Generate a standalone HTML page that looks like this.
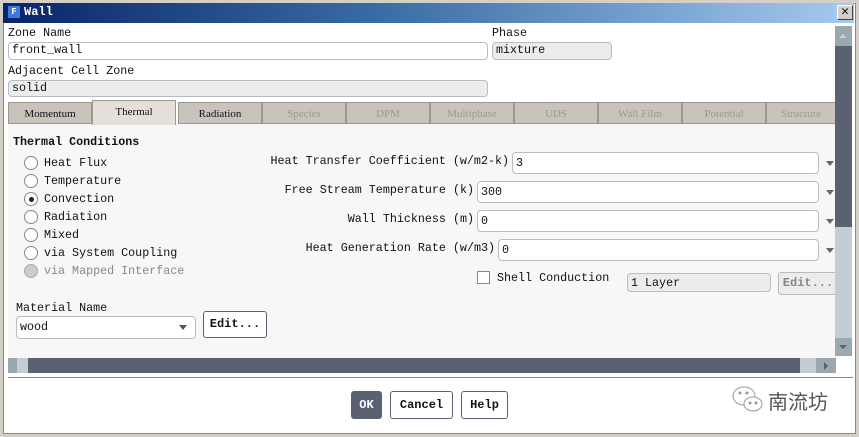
<!DOCTYPE html>
<html><head><meta charset="utf-8"><style>
*{box-sizing:border-box;margin:0;padding:0}
body{width:859px;height:437px;overflow:hidden;background:#d4d0c8;font-family:"Liberation Mono","Noto Sans CJK SC",monospace;font-size:11.7px;color:#111;position:relative}
.a{position:absolute;white-space:nowrap}
.win{position:absolute;left:3px;top:3px;width:853px;height:431px;background:#fff;border:1px solid #888}
.title{position:absolute;left:3px;top:3px;width:851px;height:20px;background:linear-gradient(90deg,#0a246a,#3a6ea5 45%,#a6caf0)}
.inp{position:absolute;border:1px solid #b8bcc4;border-radius:4px;background:#fff;padding-left:3px;line-height:15px}
.gr{background:#ececec}
.tab{position:absolute;top:102px;height:22px;width:84px;background:#c8c4bc;border:1px solid #9a9890;text-align:center;line-height:22px;font-size:11px;color:#9a9890;font-family:"Liberation Serif",serif}
.rad{position:absolute;left:24px;width:14px;height:14px;border:1px solid #888;border-radius:50%;background:#fff}
.btn{position:absolute;border:1px solid #5a6272;border-radius:3px;background:#fff;text-align:center;font-weight:bold;font-size:12px}
.dd{position:absolute;left:826px;width:0;height:0;border-left:4px solid transparent;border-right:4px solid transparent;border-top:5px solid #666}
</style></head><body>
<div class="win"></div>
<div class="title"></div>
<div class="a" style="left:8px;top:6px;width:12px;height:12px;background:#3b7be0;color:#fff;font-size:9px;font-weight:bold;text-align:center;line-height:12px">F</div>
<div class="a" style="left:24px;top:5px;color:#fff;font-weight:bold;font-size:12px">Wall</div>
<div class="a" style="left:837px;top:5px;width:16px;height:15px;background:#d4d0c8;border:1px solid #fff;border-right-color:#404040;border-bottom-color:#404040;text-align:center;line-height:12px;font-weight:bold;font-size:13px">✕</div>

<div class="a" style="left:8px;top:26px">Zone Name</div>
<div class="inp" style="left:8px;top:42px;width:480px;height:18px">front_wall</div>
<div class="a" style="left:492px;top:26px">Phase</div>
<div class="inp gr" style="left:492px;top:42px;width:120px;height:18px">mixture</div>
<div class="a" style="left:8px;top:64px">Adjacent Cell Zone</div>
<div class="inp gr" style="left:8px;top:80px;width:480px;height:17px">solid</div>

<div class="a" style="left:8px;top:124px;width:828px;height:234px;background:#f7f7f7"></div>
<div class="tab" style="left:8px;color:#111">Momentum</div>
<div class="tab" style="left:92px;top:100px;height:25px;background:#e4e0d8;color:#111;border-bottom:none">Thermal</div>
<div class="tab" style="left:178px;color:#111">Radiation</div>
<div class="tab" style="left:262px">Species</div>
<div class="tab" style="left:346px">DPM</div>
<div class="tab" style="left:430px">Multiphase</div>
<div class="tab" style="left:514px">UDS</div>
<div class="tab" style="left:598px">Wall Film</div>
<div class="tab" style="left:682px">Potential</div>
<div class="tab" style="left:766px;width:70px">Structure</div>

<div class="a" style="left:13px;top:135px;font-weight:bold">Thermal Conditions</div>
<div class="rad" style="top:156px"></div><div class="a" style="left:44px;top:156px">Heat Flux</div>
<div class="rad" style="top:174px"></div><div class="a" style="left:44px;top:174px">Temperature</div>
<div class="rad" style="top:192px"></div><div class="a" style="left:29px;top:197px;width:5px;height:5px;border-radius:50%;background:#222"></div><div class="a" style="left:44px;top:192px">Convection</div>
<div class="rad" style="top:210px"></div><div class="a" style="left:44px;top:210px">Radiation</div>
<div class="rad" style="top:228px"></div><div class="a" style="left:44px;top:228px">Mixed</div>
<div class="rad" style="top:246px"></div><div class="a" style="left:44px;top:246px">via System Coupling</div>
<div class="rad" style="top:264px;background:#ccc;border-color:#aaa"></div><div class="a" style="left:44px;top:264px;color:#888">via Mapped Interface</div>

<div class="a" style="right:350px;top:154px">Heat Transfer Coefficient (w/m2-k)</div>
<div class="inp" style="left:512px;top:152px;width:307px;height:22px;line-height:20px">3</div>
<div class="a" style="right:385px;top:183px">Free Stream Temperature (k)</div>
<div class="inp" style="left:477px;top:181px;width:342px;height:22px;line-height:20px">300</div>
<div class="a" style="right:385px;top:212px">Wall Thickness (m)</div>
<div class="inp" style="left:477px;top:210px;width:342px;height:22px;line-height:20px">0</div>
<div class="a" style="right:364px;top:241px">Heat Generation Rate (w/m3)</div>
<div class="inp" style="left:498px;top:239px;width:321px;height:22px;line-height:20px">0</div>
<div class="dd" style="top:161px"></div><div class="dd" style="top:190px"></div><div class="dd" style="top:219px"></div><div class="dd" style="top:248px"></div>
<div class="a" style="left:477px;top:271px;width:13px;height:13px;border:1px solid #888;background:#fff"></div>
<div class="a" style="left:497px;top:271px">Shell Conduction</div>
<div class="inp gr" style="left:627px;top:273px;width:144px;height:19px;line-height:18px">1 Layer</div>
<div class="btn" style="left:778px;top:272px;width:60px;height:23px;line-height:21px;background:#ececec;color:#888;border-color:#bbb">Edit...</div>

<div class="a" style="left:16px;top:301px">Material Name</div>
<div class="inp" style="left:16px;top:316px;width:180px;height:23px;line-height:21px">wood</div>
<div class="a" style="left:179px;top:325px;border-left:4px solid transparent;border-right:4px solid transparent;border-top:5px solid #555"></div>
<div class="btn" style="left:203px;top:311px;width:64px;height:27px;line-height:25px">Edit...</div>

<div class="a" style="left:835px;top:26px;width:17px;height:330px;background:#c4ccd4"></div>
<div class="a" style="left:835px;top:26px;width:17px;height:20px;background:#9aa8b0"></div>
<div class="a" style="left:839px;top:34px;border-left:4px solid transparent;border-right:4px solid transparent;border-bottom:4px solid #c8d0d8"></div>
<div class="a" style="left:835px;top:46px;width:17px;height:181px;background:#5a6272"></div>
<div class="a" style="left:835px;top:338px;width:17px;height:18px;background:#9aa8b0"></div>
<div class="a" style="left:839px;top:345px;border-left:4px solid transparent;border-right:4px solid transparent;border-top:4px solid #5a6272"></div>
<div class="a" style="left:8px;top:358px;width:828px;height:15px;background:#c4ccd4"></div>
<div class="a" style="left:8px;top:358px;width:9px;height:15px;background:#9aa8b0"></div>
<div class="a" style="left:28px;top:358px;width:772px;height:15px;background:#5a6272"></div>
<div class="a" style="left:816px;top:358px;width:20px;height:15px;background:#9aa8b0"></div>
<div class="a" style="left:824px;top:362px;border-top:4px solid transparent;border-bottom:4px solid transparent;border-left:4px solid #5a6272"></div>
<div class="a" style="left:8px;top:377px;width:845px;height:1px;background:#888"></div>

<div class="btn" style="left:351px;top:391px;width:31px;height:28px;line-height:26px;background:#5a6272;color:#fff">OK</div>
<div class="btn" style="left:390px;top:391px;width:63px;height:28px;line-height:26px">Cancel</div>
<div class="btn" style="left:461px;top:391px;width:47px;height:28px;line-height:26px">Help</div>
<svg class="a" style="left:731px;top:384px" width="36" height="32" viewBox="0 0 36 32" fill="none" stroke="#999" stroke-width="1">
<ellipse cx="13" cy="12" rx="11" ry="9"/><ellipse cx="22" cy="20" rx="9" ry="7" fill="#fff"/>
<circle cx="9" cy="9" r="1" fill="#999"/><circle cx="16" cy="9" r="1" fill="#999"/><circle cx="19" cy="19" r="1" fill="#999"/><circle cx="25" cy="19" r="1" fill="#999"/>
</svg>
<div class="a" style="left:768px;top:386px;font-family:'Noto Sans CJK SC',sans-serif;font-size:20px;color:#555">南流坊</div>
</body></html>
